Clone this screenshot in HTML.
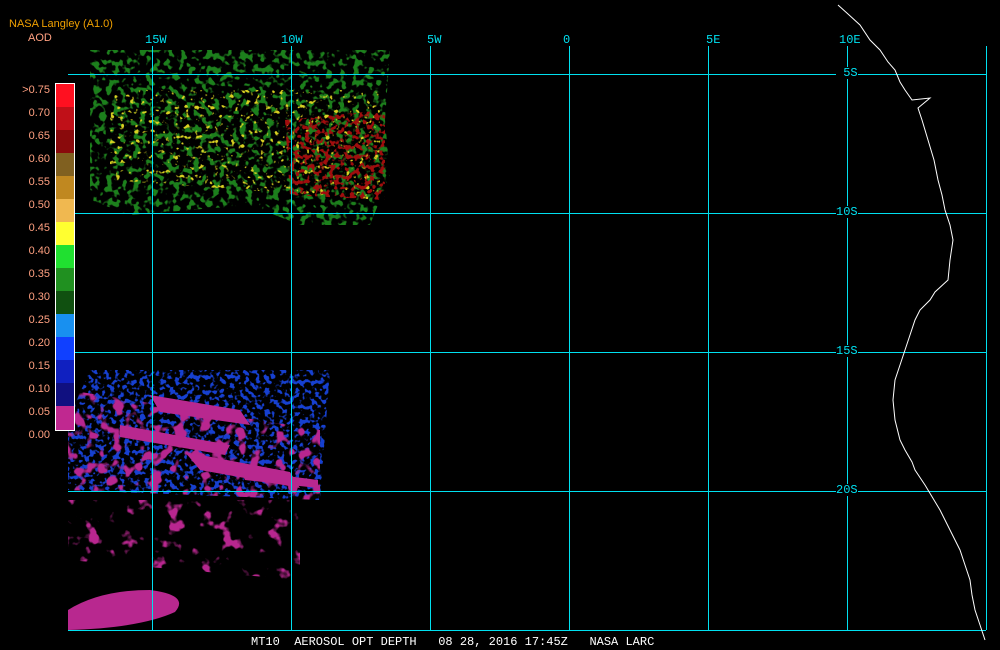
<!DOCTYPE html>
<html><head><style>
body{margin:0;background:#000;width:1000px;height:650px;overflow:hidden;font-family:"Liberation Mono",monospace;}
.t{position:absolute;font-size:11px;line-height:12px;white-space:pre}
</style></head><body>
<svg width="1000" height="650" style="position:absolute;left:0;top:0">
<defs>
<filter id="sp" x="0" y="0" width="100%" height="100%">
<feTurbulence type="fractalNoise" baseFrequency="0.15" numOctaves="2" seed="3" result="n"/>
<feColorMatrix in="n" type="matrix" values="0 0 0 0 0 0 0 0 0 0 0 0 0 0 0 9 0 0 0 -4.7" result="m"/>
<feComposite in="SourceGraphic" in2="m" operator="in"/>
</filter>
<filter id="spy" x="0" y="0" width="100%" height="100%">
<feTurbulence type="fractalNoise" baseFrequency="0.2" numOctaves="2" seed="11" result="n"/>
<feColorMatrix in="n" type="matrix" values="0 0 0 0 0 0 0 0 0 0 0 0 0 0 0 9 0 0 0 -5.7" result="m"/>
<feComposite in="SourceGraphic" in2="m" operator="in"/>
</filter>
<filter id="sp3" x="0" y="0" width="100%" height="100%">
<feTurbulence type="fractalNoise" baseFrequency="0.2" numOctaves="2" seed="5" result="n"/>
<feColorMatrix in="n" type="matrix" values="0 0 0 0 0 0 0 0 0 0 0 0 0 0 0 9 0 0 0 -4.6" result="m"/>
<feComposite in="SourceGraphic" in2="m" operator="in"/>
</filter>
<filter id="sp2" x="0" y="0" width="100%" height="100%">
<feTurbulence type="fractalNoise" baseFrequency="0.06" numOctaves="3" seed="7" result="n"/>
<feColorMatrix in="n" type="matrix" values="0 0 0 0 0 0 0 0 0 0 0 0 0 0 0 10 0 0 0 -6.0" result="m"/>
<feComposite in="SourceGraphic" in2="m" operator="in"/>
</filter>
<filter id="sp4" x="0" y="0" width="100%" height="100%">
<feTurbulence type="fractalNoise" baseFrequency="0.08" numOctaves="2" seed="9" result="n"/>
<feColorMatrix in="n" type="matrix" values="0 0 0 0 0 0 0 0 0 0 0 0 0 0 0 10 0 0 0 -5.5" result="m"/>
<feComposite in="SourceGraphic" in2="m" operator="in"/>
</filter>
</defs>
<g filter="url(#sp)">
<path d="M90 50 L390 50 L385 120 L390 175 L370 225 L300 225 L250 205 L130 215 L90 200 Z" fill="#1f801f"/>
</g>
<g filter="url(#spy)">
<path d="M110 90 L380 90 L380 200 L110 180 Z" fill="#d8d020"/>
</g>
<g filter="url(#sp3)">
<path d="M285 120 L385 110 L385 200 L290 195 Z" fill="#a01010"/>
</g>
<g filter="url(#sp3)">
<path d="M90 370 L330 370 L320 500 L68 490 L68 420 Z" fill="#1840d0"/>
</g>
<g filter="url(#sp4)">
<path d="M68 390 L320 430 L320 500 L68 490 Z" fill="#b8288f"/>
</g>
<g filter="url(#sp2)" fill="#b8288f">
<path d="M68 500 L300 500 L300 580 L68 560 Z"/>
</g>
<g fill="#b8288f">
<path d="M150 395 L240 410 L250 425 L160 412 Z"/>
<path d="M185 452 L290 472 L300 488 L200 470 Z"/>
<path d="M120 425 L230 445 L225 455 L120 437 Z"/>
<path d="M240 470 L318 480 L318 488 L245 480 Z"/>
<path d="M68 610 Q100 590 150 590 Q190 595 175 612 Q140 628 68 630 Z"/>
</g>
<g stroke="#00e0f0" stroke-width="1" shape-rendering="crispEdges">
<line x1="68" y1="74.5" x2="986" y2="74.5"/><line x1="68" y1="213.5" x2="986" y2="213.5"/>
<line x1="68" y1="352.5" x2="986" y2="352.5"/><line x1="68" y1="491.5" x2="986" y2="491.5"/>
<line x1="68" y1="630.5" x2="986" y2="630.5"/>
<line x1="152.5" y1="46" x2="152.5" y2="630"/><line x1="291.5" y1="46" x2="291.5" y2="630"/>
<line x1="430.5" y1="46" x2="430.5" y2="630"/><line x1="569.5" y1="46" x2="569.5" y2="630"/>
<line x1="708.5" y1="46" x2="708.5" y2="630"/><line x1="847.5" y1="46" x2="847.5" y2="630"/>
<line x1="986.5" y1="46" x2="986.5" y2="630"/>
</g>
<polyline fill="none" stroke="#fff" stroke-width="1" points="838,5 848,14 860,25 870,40 880,50 888,62 895,70 900,82 905,90 912,100 930,98 918,108 922,120 928,140 934,160 938,180 942,195 945,210 950,225 953,240 950,260 948,280 935,292 930,300 920,310 915,320 910,335 905,350 900,365 895,380 893,400 895,420 900,440 905,450 912,462 915,470 925,485 940,510 950,530 960,550 965,565 970,580 972,595 975,610 980,625 985,640"/>
<g shape-rendering="crispEdges">
<rect x="56" y="84" width="18" height="23" fill="#ff1020"/>
<rect x="56" y="107" width="18" height="23" fill="#c01018"/>
<rect x="56" y="130" width="18" height="23" fill="#8a0a0c"/>
<rect x="56" y="153" width="18" height="23" fill="#806020"/>
<rect x="56" y="176" width="18" height="23" fill="#c08820"/>
<rect x="56" y="199" width="18" height="23" fill="#f0b850"/>
<rect x="56" y="222" width="18" height="23" fill="#ffff30"/>
<rect x="56" y="245" width="18" height="23" fill="#20e030"/>
<rect x="56" y="268" width="18" height="23" fill="#209020"/>
<rect x="56" y="291" width="18" height="23" fill="#105010"/>
<rect x="56" y="314" width="18" height="23" fill="#1890f0"/>
<rect x="56" y="337" width="18" height="23" fill="#1040ff"/>
<rect x="56" y="360" width="18" height="23" fill="#1020c0"/>
<rect x="56" y="383" width="18" height="23" fill="#101080"/>
<rect x="56" y="406" width="18" height="24" fill="#c02890"/>
<rect x="55.5" y="83.5" width="19" height="347" fill="none" stroke="#fff"/>
</g>
</svg>
<div class="t" style="left:9px;top:18px;color:#f0a000;font-family:'Liberation Sans',sans-serif">NASA Langley (A1.0)</div>
<div class="t" style="left:28px;top:32px;color:#ffa080;font-family:'Liberation Sans',sans-serif">AOD</div>
<div class="t" style="left:0;width:50px;text-align:right;top:79px;color:#ffa080;line-height:23px;font-family:'Liberation Sans',sans-serif">&gt;0.75
0.70
0.65
0.60
0.55
0.50
0.45
0.40
0.35
0.30
0.25
0.20
0.15
0.10
0.05
0.00</div>
<div class="t" style="left:145px;top:34px;color:#00e0f0;font-size:12px">15W</div>
<div class="t" style="left:281px;top:34px;color:#00e0f0;font-size:12px">10W</div>
<div class="t" style="left:427px;top:34px;color:#00e0f0;font-size:12px">5W</div>
<div class="t" style="left:563px;top:34px;color:#00e0f0;font-size:12px">0</div>
<div class="t" style="left:706px;top:34px;color:#00e0f0;font-size:12px">5E</div>
<div class="t" style="left:839px;top:34px;color:#00e0f0;font-size:12px">10E</div>
<div class="t" style="left:836px;top:67px;color:#00e0f0;background:#000;font-size:12px"> 5S</div>
<div class="t" style="left:836px;top:206px;color:#00e0f0;background:#000;font-size:12px">10S</div>
<div class="t" style="left:836px;top:345px;color:#00e0f0;background:#000;font-size:12px">15S</div>
<div class="t" style="left:836px;top:484px;color:#00e0f0;background:#000;font-size:12px">20S</div>
<div class="t" style="left:251px;top:636px;color:#fff;font-size:12px">MT10  AEROSOL OPT DEPTH   08 28, 2016 17:45Z   NASA LARC</div>
</body></html>
